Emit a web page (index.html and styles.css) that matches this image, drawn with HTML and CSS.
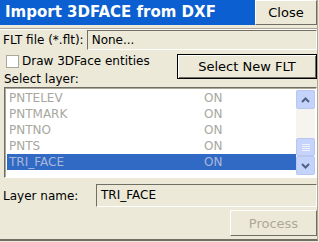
FILE: index.html
```html
<!DOCTYPE html>
<html>
    <head>
        <meta charset="UTF-8">
        <title>Import 3DFACE from DXF</title>
        <link rel="stylesheet" href="styles.css">
    </head>
    <body>
        <div class="dialog">
            <div class="titlebar">
                <div class="title">Import 3DFACE from DXF</div>
                <button class="btn closebtn">Close</button>
            </div>
            <div class="groove"></div>

            <div class="fltrow">
                <span class="lbl">FLT file (*.flt):</span>
                <div class="field fltfield">None...</div>
            </div>

            <div class="optrow">
                <label class="check"><span class="box"></span>Draw 3DFace entities</label>
                <button class="btn defbtn">Select New FLT</button>
            </div>

            <div class="lbl sellbl">Select layer:</div>

            <div class="listbox">
                <div class="rows">
                    <div class="item"><span class="name">PNTELEV</span><span class="state">ON</span></div>
                    <div class="item"><span class="name">PNTMARK</span><span class="state">ON</span></div>
                    <div class="item"><span class="name">PNTNO</span><span class="state">ON</span></div>
                    <div class="item"><span class="name">PNTS</span><span class="state">ON</span></div>
                    <div class="item selected"><span class="name">TRI_FACE</span><span class="state">ON</span></div>
                </div>
                <div class="scrollbar">
                    <div class="sbtn">
                        <svg width="9" height="6" viewBox="0 0 9 6"><path d="M1 5 L4.5 1.5 L8 5" fill="none" stroke="#4d6185" stroke-width="2"/></svg>
                    </div>
                    <div class="track"></div>
                    <div class="thumb">
                        <svg width="8" height="8" viewBox="0 0 8 8"><path d="M0 1.5h8M0 3.5h8M0 5.5h8M0 7.5h8" stroke="#eef0fb" stroke-width="1"/></svg>
                    </div>
                    <div class="sbtn">
                        <svg width="9" height="6" viewBox="0 0 9 6"><path d="M1 1 L4.5 4.5 L8 1" fill="none" stroke="#4d6185" stroke-width="2"/></svg>
                    </div>
                </div>
            </div>

            <div class="namerow">
                <span class="lbl">Layer name:</span>
                <div class="field namefield">TRI_FACE</div>
            </div>

            <div class="footer">
                <button class="btn processbtn" disabled>Process</button>
            </div>
        </div>
    </body>
</html>
```

FILE: styles.css
```css
*{
    box-sizing: border-box;
}
body{
    margin: 0;
    background-color: #ece9d8;
    font-family: "DejaVu Sans", sans-serif;
    font-size: 12px;
    color: #000;
}
.dialog{
    width: 318px;
    height: 241px;
    display: flex;
    flex-direction: column;
    border-right: solid 1px #aca899;
    border-bottom: solid 2px #716f64;
}
.titlebar{
    display: flex;
    height: 25px;
}
.title{
    flex: 1;
    background-color: #0b5fd0;
    color: white;
    font-weight: bold;
    font-size: 15px;
    padding-left: 5px;
    line-height: 24px;
}
.btn{
    font-family: "DejaVu Sans", sans-serif;
    font-size: 12px;
    background-color: #ece9d8;
    color: #000;
    border: solid 1px;
    border-color: #fff #716f64 #716f64 #fff;
    padding: 0;
}
.closebtn{
    width: 62px;
    height: 25px;
    font-size: 13px;
}
.groove{
    margin-top: 3px;
    border-top: solid 1px #aca899;
    border-bottom: solid 1px #fff;
}
.fltrow{
    display: flex;
    align-items: center;
    gap: 3px;
    padding-left: 3px;
}
.field{
    border: solid 1px;
    border-color: #716f64 #fff #fff #716f64;
    padding-left: 4px;
}
.fltfield{
    flex: 1;
    height: 20px;
    line-height: 18px;
}
.optrow{
    display: flex;
    justify-content: space-between;
    align-items: flex-start;
    margin-top: 4px;
    padding-left: 6px;
}
.check{
    display: flex;
    align-items: center;
    gap: 3px;
}
.box{
    width: 13px;
    height: 13px;
    background-color: #fff;
    border: solid 1px #aca899;
}
.defbtn{
    width: 140px;
    height: 25px;
    font-size: 13px;
    border: solid 1px #000;
    box-shadow: inset 1px 1px #fff, inset -1px -1px #716f64;
}
.sellbl{
    padding-left: 4px;
    margin-top: -7px;
    height: 15px;
}
.listbox{
    margin-left: 4px;
    height: 91px;
    display: flex;
    background-color: #fff;
    border: solid 1px;
    border-color: #716f64 #fff #fff #716f64;
    box-shadow: inset 1px 1px #aca899;
    padding: 2px 1px 2px 2px;
}
.rows{
    flex: 1;
}
.item{
    display: flex;
    height: 16px;
    line-height: 16px;
    color: #a7a7a0;
}
.item.selected{
    background-color: #316ac5;
    color: #aab8d8;
}
.name{
    width: 197px;
    padding-left: 2px;
}
.scrollbar{
    width: 19px;
    display: flex;
    flex-direction: column;
    background-color: #f5f4ee;
}
.sbtn{
    height: 19px;
    border: solid 1px #b7c7f0;
    border-radius: 2px;
    background-color: #c4d3fb;
    display: flex;
    align-items: center;
    justify-content: center;
}
.track{
    flex: 1;
}
.thumb{
    height: 18px;
    border: solid 1px #b7c7f0;
    border-radius: 2px;
    background-color: #c6d4fb;
    display: flex;
    align-items: center;
    justify-content: center;
}
.namerow{
    display: flex;
    align-items: center;
    margin-top: 6px;
    padding-left: 3px;
}
.namerow .lbl{
    width: 93px;
}
.namefield{
    flex: 1;
    height: 23px;
    line-height: 21px;
}
.footer{
    display: flex;
    justify-content: flex-end;
    margin-top: 3px;
}
.processbtn{
    width: 87px;
    height: 26px;
    font-size: 13px;
    color: #aca899;
}
```
